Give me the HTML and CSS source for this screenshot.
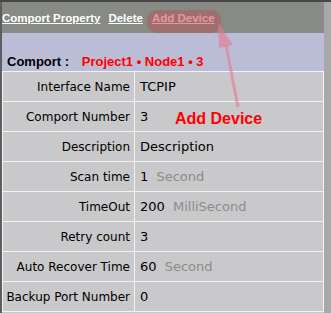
FILE: index.html
```html
<!DOCTYPE html>
<html>
<head>
    <title>Comport Property</title>
    <link rel="stylesheet" href="styles.css">
</head>
<body>
    <div id="frame">
        <div id="main">
            <div class="toolbar">
                <a href="#">Comport Property</a>
                <a href="#">Delete</a>
                <a href="#" class="add">Add Device</a>
            </div>
            <div class="header">
                <span class="title">Comport :</span>
                <span class="path">Project1 &bull; Node1 &bull; 3</span>
            </div>
            <table class="props">
                <tr><td class="name">Interface Name</td><td class="val">TCPIP</td></tr>
                <tr><td class="name">Comport Number</td><td class="val">3</td></tr>
                <tr><td class="name">Description</td><td class="val">Description</td></tr>
                <tr><td class="name">Scan time</td><td class="val">1 <span class="unit">Second</span></td></tr>
                <tr><td class="name">TimeOut</td><td class="val">200 <span class="unit">MilliSecond</span></td></tr>
                <tr><td class="name">Retry count</td><td class="val">3</td></tr>
                <tr><td class="name">Auto Recover Time</td><td class="val">60 <span class="unit">Second</span></td></tr>
                <tr><td class="name">Backup Port Number</td><td class="val">0</td></tr>
            </table>
        </div>
        <div id="scrollbar"></div>
    </div>

    <!-- callout pointing at the Add Device link -->
    <div class="callout-box"></div>
    <svg class="callout-arrow" width="40" height="95" viewBox="0 0 40 95">
        <line x1="18" y1="27" x2="30" y2="89" stroke="rgba(232,120,140,0.6)" stroke-width="3"/>
        <polygon points="10,4 11,30 25,27" fill="rgba(232,120,140,0.6)"/>
    </svg>
    <div class="callout-text">Add Device</div>
</body>
</html>
```
FILE: styles.css
```css
body {
    margin: 0;
    padding: 0;
    font-family: "DejaVu Sans", Tahoma, sans-serif;
    background-color: #c9c8ca;
    overflow: hidden;
}
#frame {
    display: flex;
    height: 313px;
    border-top: 2px solid #474747;
    box-sizing: border-box;
}
#main {
    flex: 1;
    border-left: 2px solid #5e5e5e;
    background-color: #c9c8ca;
}
#scrollbar {
    width: 7px;
    background-color: #a8a8a8;
}
.toolbar {
    height: 31px;
    background-color: #888a86;
    display: flex;
    align-items: center;
    gap: 8px;
    padding-top: 1px;
    box-sizing: border-box;
}
.toolbar a {
    color: #fff;
    font-family: "Liberation Sans", Arial, sans-serif;
    font-weight: bold;
    font-size: 11.5px;
    text-decoration: underline;
}
.toolbar a.add {
    color: #f7c9cc;
    margin-left: 1px;
}
.header {
    height: 38px;
    background-color: #bbbcd5;
    box-sizing: border-box;
    padding: 21px 0 0 5px;
    font-family: "Liberation Sans", Arial, sans-serif;
    font-weight: bold;
    font-size: 13px;
}
.header .title {
    color: #000;
    margin-right: 9px;
}
.header .path {
    color: #f00;
}
.props {
    border-collapse: collapse;
    table-layout: fixed;
    width: 322px;
}
.props td {
    border: 1px solid #f2f2f2;
    height: 29px;
    padding: 0;
    font-size: 12px;
    color: #000;
    white-space: nowrap;
}
.props td.name {
    width: 127px;
    text-align: right;
    padding-right: 4px;
}
.props td.val {
    padding-left: 5px;
    font-size: 13px;
}
.unit {
    color: #8c8c8c;
    margin-left: 4px;
}
.callout-box {
    position: absolute;
    left: 147px;
    top: 10px;
    width: 74px;
    height: 23px;
    border-radius: 10px;
    background-color: rgba(200, 60, 70, 0.35);
}
.callout-arrow {
    position: absolute;
    left: 208px;
    top: 18px;
}
.callout-text {
    position: absolute;
    left: 175px;
    top: 110px;
    color: #f00;
    font-family: "Liberation Sans", Arial, sans-serif;
    font-weight: bold;
    font-size: 16px;
}
```
